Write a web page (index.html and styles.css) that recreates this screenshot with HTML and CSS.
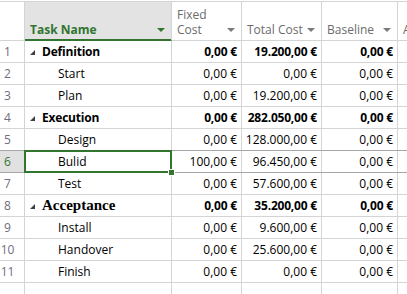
FILE: index.html
```html
<!DOCTYPE html>
<html lang="en">
<head>
    <meta charset="UTF-8">
    <title>Task Costs</title>
    <link rel="stylesheet" href="styles.css">
</head>
<body>
    <div class="sheet">
        <div class="row head">
            <div class="cell num"></div>
            <div class="cell task-head">Task Name<span class="arrow green"></span></div>
            <div class="cell">Fixed Cost<span class="arrow"></span></div>
            <div class="cell">Total Cost<span class="arrow"></span></div>
            <div class="cell">Baseline<span class="arrow"></span></div>
            <div class="cell last">Actual</div>
        </div>

        <div class="row summary">
            <div class="cell num">1</div>
            <div class="cell task"><span class="toggle"></span>Definition</div>
            <div class="cell money">0,00 €</div>
            <div class="cell money">19.200,00 €</div>
            <div class="cell money">0,00 €</div>
            <div class="cell last"></div>
        </div>
        <div class="row">
            <div class="cell num">2</div>
            <div class="cell task sub">Start</div>
            <div class="cell money">0,00 €</div>
            <div class="cell money">0,00 €</div>
            <div class="cell money">0,00 €</div>
            <div class="cell last"></div>
        </div>
        <div class="row">
            <div class="cell num">3</div>
            <div class="cell task sub">Plan</div>
            <div class="cell money">0,00 €</div>
            <div class="cell money">19.200,00 €</div>
            <div class="cell money">0,00 €</div>
            <div class="cell last"></div>
        </div>

        <div class="row summary">
            <div class="cell num">4</div>
            <div class="cell task"><span class="toggle"></span>Execution</div>
            <div class="cell money">0,00 €</div>
            <div class="cell money">282.050,00 €</div>
            <div class="cell money">0,00 €</div>
            <div class="cell last"></div>
        </div>
        <div class="row before-selected">
            <div class="cell num">5</div>
            <div class="cell task sub">Design</div>
            <div class="cell money">0,00 €</div>
            <div class="cell money">128.000,00 €</div>
            <div class="cell money">0,00 €</div>
            <div class="cell last"></div>
        </div>
        <div class="row selected">
            <div class="cell num">6</div>
            <div class="cell task sub active">Bulid</div>
            <div class="cell money">100,00 €</div>
            <div class="cell money">96.450,00 €</div>
            <div class="cell money">0,00 €</div>
            <div class="cell last"></div>
        </div>
        <div class="row">
            <div class="cell num">7</div>
            <div class="cell task sub">Test</div>
            <div class="cell money">0,00 €</div>
            <div class="cell money">57.600,00 €</div>
            <div class="cell money">0,00 €</div>
            <div class="cell last"></div>
        </div>

        <div class="row summary">
            <div class="cell num">8</div>
            <div class="cell task serif"><span class="toggle"></span>Acceptance</div>
            <div class="cell money">0,00 €</div>
            <div class="cell money">35.200,00 €</div>
            <div class="cell money">0,00 €</div>
            <div class="cell last"></div>
        </div>
        <div class="row">
            <div class="cell num">9</div>
            <div class="cell task sub">Install</div>
            <div class="cell money">0,00 €</div>
            <div class="cell money">9.600,00 €</div>
            <div class="cell money">0,00 €</div>
            <div class="cell last"></div>
        </div>
        <div class="row">
            <div class="cell num">10</div>
            <div class="cell task sub">Handover</div>
            <div class="cell money">0,00 €</div>
            <div class="cell money">25.600,00 €</div>
            <div class="cell money">0,00 €</div>
            <div class="cell last"></div>
        </div>
        <div class="row">
            <div class="cell num">11</div>
            <div class="cell task sub">Finish</div>
            <div class="cell money">0,00 €</div>
            <div class="cell money">0,00 €</div>
            <div class="cell money">0,00 €</div>
            <div class="cell last"></div>
        </div>
        <div class="row empty">
            <div class="cell num"></div>
            <div class="cell"></div>
            <div class="cell"></div>
            <div class="cell"></div>
            <div class="cell"></div>
            <div class="cell last"></div>
        </div>
    </div>
</body>
</html>
```

FILE: styles.css
```css
body {
    margin: 0;
    background-color: #fff;
    font-family: "Open Sans", Arial, sans-serif;
    font-size: 12px;
    color: #000;
    overflow: hidden;
}

.sheet {
    padding-top: 1px;
}

.row {
    display: grid;
    grid-template-columns: 25px 147px 70px 80px 76px 1fr;
    height: 22px;
    border-bottom: 1px solid #d4d4d4;
    box-sizing: border-box;
}

.cell {
    border-right: 1px solid #d4d4d4;
    display: flex;
    align-items: center;
    white-space: nowrap;
    overflow: hidden;
    position: relative;
}

.cell.last {
    border-right: none;
}

/* header */
.head {
    height: 40px;
    border-top: 1px solid #d4d4d4;
}

.head .cell {
    align-items: flex-end;
    padding: 0 18px 3px 5px;
    color: #6b6b6b;
    white-space: normal;
    line-height: 15px;
}

.head .cell.num {
    padding: 0;
}

.head .cell.last {
    padding-right: 0;
    white-space: nowrap;
}

.head .task-head {
    background-color: #e3e3e3;
    color: #31752f;
    font-weight: bold;
    box-shadow: inset 0 -1px 0 #31752f;
    margin-bottom: -1px;
    border-bottom: 1px solid #31752f;
}

.arrow {
    position: absolute;
    right: 6px;
    bottom: 8px;
    width: 0;
    height: 0;
    border-left: 4px solid transparent;
    border-right: 4px solid transparent;
    border-top: 4px solid #7a7a7a;
}

.arrow.green {
    border-top-color: #31752f;
}

/* body */
.num {
    justify-content: center;
    padding-right: 9px;
    color: #6e6e7e;
}

.task {
    padding-left: 5px;
}

.task.sub {
    padding-left: 33px;
}

.toggle {
    width: 0;
    height: 0;
    border-left: 5px solid transparent;
    border-bottom: 5px solid #404040;
    margin-right: 7px;
    margin-top: 1px;
}

.summary .cell {
    font-weight: bold;
    letter-spacing: -0.2px;
}

.summary .num {
    font-weight: normal;
    letter-spacing: 0;
}

.summary .serif {
    font-family: "Liberation Serif", "Times New Roman", serif;
    font-size: 15px;
    letter-spacing: 0;
}

.money {
    justify-content: flex-end;
    padding-right: 4px;
}

.before-selected {
    border-bottom-color: #a6a6a6;
}

.selected {
    border-bottom-color: #a6a6a6;
}

.selected .num {
    background-color: #e1e1e1;
    color: #31752f;
}

.active {
    overflow: visible;
}

.active::before {
    content: "";
    position: absolute;
    left: -1px;
    right: -1px;
    top: -1px;
    bottom: -1px;
    border: 2px solid #31752f;
}

.active::after {
    content: "";
    position: absolute;
    right: -4px;
    bottom: -4px;
    width: 5px;
    height: 5px;
    background-color: #31752f;
    border: 1px solid #fff;
    z-index: 2;
}

.empty {
    border-bottom: none;
}
```
